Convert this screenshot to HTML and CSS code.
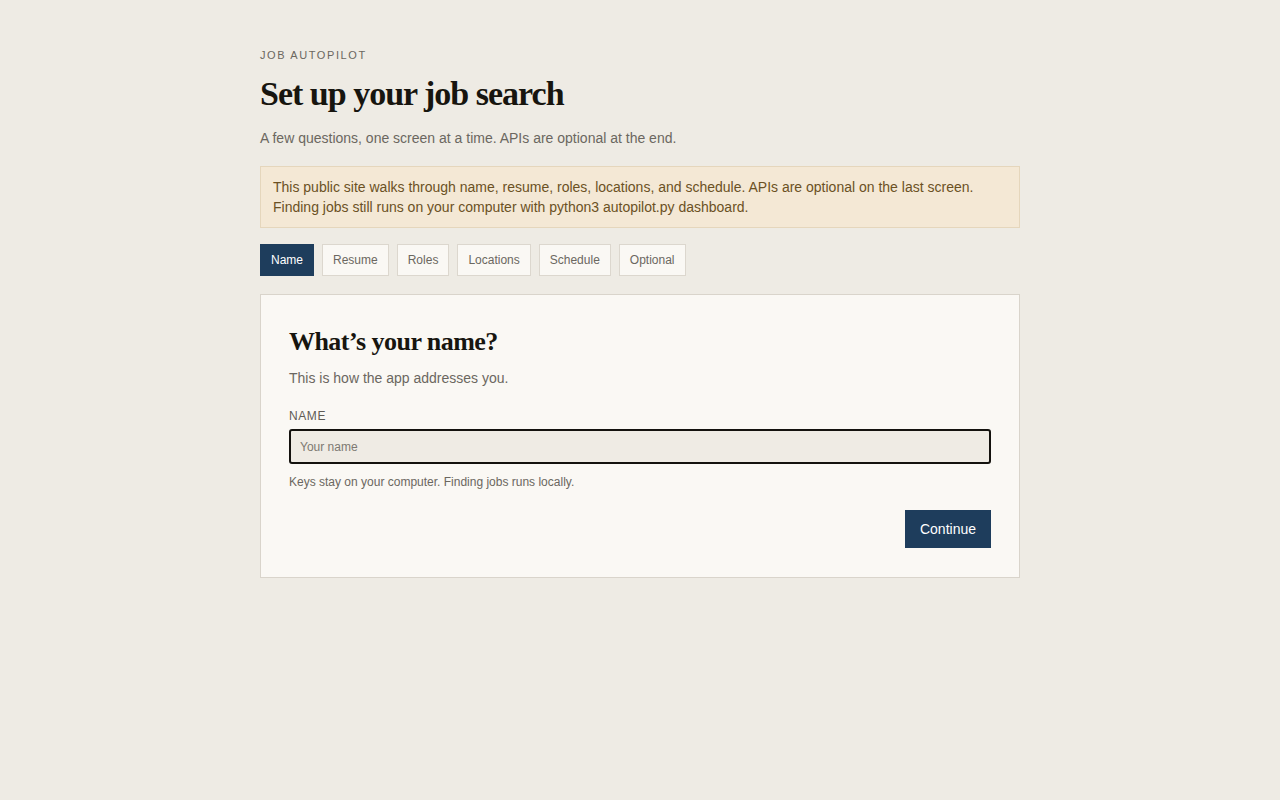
FILE: index.html
```html
<!DOCTYPE html>
<html lang="en">
<head>
<meta charset="utf-8">
<title>Job Autopilot</title>
<link rel="stylesheet" href="styles.css">
</head>
<body>
<main class="page">
  <div class="eyebrow">JOB AUTOPILOT</div>
  <h1 class="title">Set up your job search</h1>
  <p class="lead">A few questions, one screen at a time. APIs are optional at the end.</p>
  <div class="notice">This public site walks through name, resume, roles, locations, and schedule. APIs are optional on the last screen. Finding jobs still runs on your computer with python3 autopilot.py dashboard.</div>
  <nav class="steps">
    <span class="step active">Name</span>
    <span class="step">Resume</span>
    <span class="step">Roles</span>
    <span class="step">Locations</span>
    <span class="step">Schedule</span>
    <span class="step">Optional</span>
  </nav>
  <section class="card">
    <h2 class="card-title">What’s your name?</h2>
    <p class="card-desc">This is how the app addresses you.</p>
    <label class="field-label" for="name">NAME</label>
    <input class="field" id="name" type="text" placeholder="Your name">
    <p class="hint">Keys stay on your computer. Finding jobs runs locally.</p>
    <div class="actions">
      <button class="btn" type="button">Continue</button>
    </div>
  </section>
</main>
</body>
</html>
```
FILE: styles.css
```css
* { box-sizing: border-box; }
html, body { margin: 0; padding: 0; }
body {
  background: #eeebe4;
  font-family: "Liberation Sans", Arial, sans-serif;
  color: #1a1a1a;
}
.page {
  width: 760px;
  margin: 0 auto;
  padding-top: 48px;
}
.eyebrow {
  font-size: 11px;
  letter-spacing: 1.6px;
  color: #6b6760;
  line-height: 14px;
}
.title {
  font-family: "Liberation Serif", "Times New Roman", serif;
  font-weight: 700;
  font-size: 34px;
  letter-spacing: -1px;
  line-height: 42px;
  margin: 11px 0 0;
  color: #17150f;
}
.lead {
  font-size: 14px;
  line-height: 20px;
  color: #6b6760;
  margin: 13px 0 0;
}
.notice {
  margin-top: 18px;
  background: #f4e8d5;
  border: 1px solid #e5d6bc;
  color: #6b5124;
  font-size: 14px;
  line-height: 20px;
  padding: 10px 12px;
}
.steps {
  display: flex;
  gap: 8px;
  margin-top: 16px;
}
.step {
  display: flex;
  align-items: center;
  height: 32px;
  padding: 0 10px;
  font-size: 12px;
  color: #6b6760;
  background: #faf8f4;
  border: 1px solid #dcd7ce;
}
.step.active {
  background: #1e3d5c;
  border-color: #1e3d5c;
  color: #ffffff;
}
.card {
  margin-top: 18px;
  background: #faf8f4;
  border: 1px solid #d9d4cb;
  padding: 28px 28px 29px;
}
.card-title {
  font-family: "Liberation Serif", "Times New Roman", serif;
  font-weight: 700;
  font-size: 26px;
  letter-spacing: -0.55px;
  line-height: 34px;
  margin: 2px 0 0;
  color: #17150f;
}
.card-desc {
  font-size: 14px;
  line-height: 20px;
  color: #6b6760;
  margin: 9px 0 0;
}
.field-label {
  display: block;
  margin-top: 19px;
  font-size: 12px;
  letter-spacing: 0.6px;
  line-height: 18px;
  color: #5f5b54;
}
.field {
  display: block;
  width: 100%;
  height: 35px;
  margin-top: 4px;
  padding: 0 9px;
  font-family: "Liberation Sans", Arial, sans-serif;
  font-size: 12px;
  color: #1a1a1a;
  background: #efebe4;
  border: 2px solid #14120e;
  border-radius: 3px;
  outline: none;
}
.field::placeholder { color: #7d7972; }
.hint {
  font-size: 12px;
  line-height: 16px;
  color: #6b6760;
  margin: 10px 0 0;
}
.actions {
  display: flex;
  justify-content: flex-end;
  margin-top: 20px;
}
.btn {
  height: 38px;
  padding: 0 15px;
  background: #1e3d5c;
  color: #ffffff;
  border: none;
  font-family: "Liberation Sans", Arial, sans-serif;
  font-size: 14px;
  cursor: pointer;
}
```
